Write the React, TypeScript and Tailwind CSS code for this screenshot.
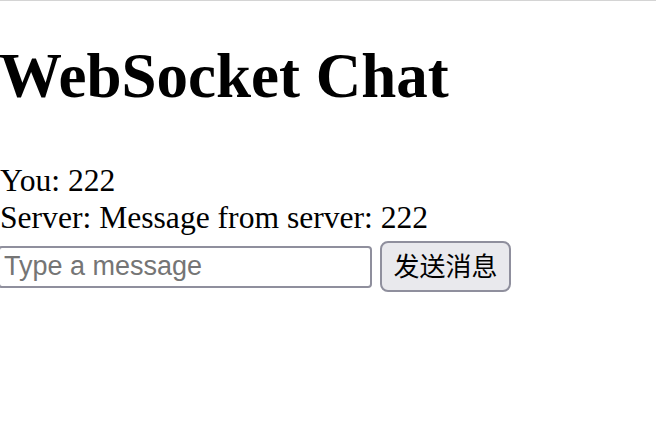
import React, { FC, useState } from "react";

type Message = {
  from: string;
  text: string;
};

const initialMessages: Message[] = [
  { from: "You", text: "222" },
  { from: "Server", text: "Message from server: 222" },
];

const App: FC = () => {
  const [messages, setMessages] = useState<Message[]>(initialMessages);
  const [input, setInput] = useState("");

  const sendMessage = () => {
    if (!input.trim()) return;
    setMessages([
      ...messages,
      { from: "You", text: input },
      { from: "Server", text: `Message from server: ${input}` },
    ]);
    setInput("");
  };

  return (
    <div className="w-[656px] h-[444px] bg-white border-t border-[#d4d4d4] overflow-hidden text-black font-['Liberation_Serif',serif]">
      <h1 className="mt-[38px] -ml-[1px] text-[63px] leading-[74px] font-bold">
        WebSocket Chat
      </h1>

      <div className="mt-[49px] text-[31.6px] leading-[37px]">
        {messages.map((msg, index) => (
          <div key={index}>
            {msg.from}: {msg.text}
          </div>
        ))}
      </div>

      <div className="mt-[5px] flex items-center">
        <input
          type="text"
          value={input}
          onChange={(e) => setInput(e.target.value)}
          placeholder="Type a message"
          className="-ml-[2px] w-[374px] h-[42px] px-[4px] border-2 border-[#8f8f9d] rounded-[4px] bg-white text-[27px] font-['Liberation_Sans','Noto_Sans_CJK_SC',sans-serif] placeholder:text-[#757575] outline-none"
        />
        <button
          onClick={sendMessage}
          className="ml-[8px] w-[131px] h-[51px] px-[10px] border-2 border-[#8f8f9d] rounded-[8px] bg-[#e9e9ed] text-[26px] leading-none whitespace-nowrap text-black font-['Liberation_Sans','Noto_Sans_CJK_SC',sans-serif]"
        >
          发送消息
        </button>
      </div>
    </div>
  );
};

export default App;
